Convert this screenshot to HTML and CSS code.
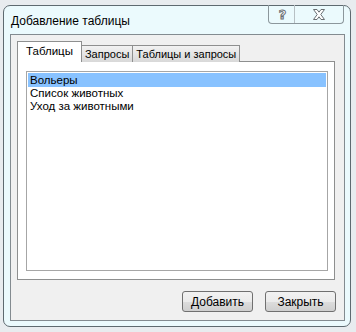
FILE: index.html
```html
<!DOCTYPE html>
<html>

<head>
    <title>Добавление таблицы</title>
    <link rel="stylesheet" href="styles.css">
</head>

<body>
    <div class="window">
        <div class="titlebar">
            <span class="title">Добавление таблицы</span>
            <div class="caption-buttons">
                <div class="cap-btn help">?</div>
                <div class="cap-btn close">
                    <svg width="14" height="11" viewBox="0 0 14 11">
                        <path d="M1.5 0.5 H5 L7 3.2 L9 0.5 H12.5 L8.8 5.5 L12.5 10.5 H9 L7 7.8 L5 10.5 H1.5 L5.2 5.5 Z"
                            fill="#fff" stroke="#6a6f73" stroke-width="1" />
                    </svg>
                </div>
            </div>
        </div>

        <div class="client">
            <div class="tabs">
                <div class="tab active">Таблицы</div>
                <div class="tab">Запросы</div>
                <div class="tab">Таблицы и запросы</div>
            </div>
            <div class="tabpanel">
                <div class="listbox">
                    <div class="item selected">Вольеры</div>
                    <div class="item">Список животных</div>
                    <div class="item">Уход за животными</div>
                </div>
            </div>
            <div class="buttons">
                <button class="btn">Добавить</button>
                <button class="btn">Закрыть</button>
            </div>
        </div>
    </div>
</body>

</html>
```

FILE: styles.css
```css
body {
    margin: 0;
    padding: 0;
    background-color: #e8ecef;
    font-family: "Liberation Sans", Arial, sans-serif;
    font-size: 11.5px;
    color: #000;
}

/* dialog frame */
.window {
    box-sizing: border-box;
    width: 348px;
    height: 322px;
    margin: 5px 0 0 3px;
    border: 1px solid #5e6a70;
    border-radius: 7px;
    background-color: #ebfafd;
    padding: 0 5px 5px 6px;
    display: flex;
    flex-direction: column;
}

.titlebar {
    height: 28px;
    flex-shrink: 0;
    display: flex;
    justify-content: space-between;
    align-items: flex-start;
}

.title {
    margin-top: 8px;
    margin-left: 1px;
    font-size: 12px;
}

.caption-buttons {
    display: flex;
    height: 18px;
    border: 1px solid #8c979c;
    border-top: none;
    border-radius: 0 0 4px 4px;
    margin-top: -1px;
    margin-right: 1px;
}

.cap-btn {
    display: flex;
    align-items: center;
    justify-content: center;
    height: 18px;
}

.help {
    width: 26px;
    padding-left: 2px;
    box-sizing: border-box;
    border-right: 1px solid #b7c0c4;
    font-family: "DejaVu Sans", sans-serif;
    font-weight: bold;
    font-size: 13px;
    color: #fff;
    -webkit-text-stroke: 1px #6a6f73;
}

.close {
    width: 48px;
}

/* inner grey area */
.client {
    flex: 1;
    background-color: #f0f0f0;
    border: 1px solid #838b90;
    padding: 7px 9px 8px 6px;
    display: flex;
    flex-direction: column;
}

.tabs {
    display: flex;
    align-items: flex-end;
    height: 20px;
    position: relative;
    z-index: 1;
}

.tab {
    height: 16px;
    line-height: 16px;
    font-size: 11px;
    padding: 0 3px;
    border: 1px solid #8e8f8f;
    border-bottom: none;
    background: linear-gradient(#f2f2f2, #d8d8d8);
    margin-left: -1px;
}

.tab.active {
    height: 20px;
    line-height: 19px;
    font-size: 11.5px;
    background: #fff;
    margin-left: 0;
    padding: 0 8px;
}

.tabpanel {
    flex: 1;
    background-color: #fff;
    border: 1px solid #8e8f8f;
    margin-top: -1px;
    padding: 9px 6px 8px 8px;
    display: flex;
}

.listbox {
    flex: 1;
    border: 1px solid #a6a6a6;
    padding: 1px;
}

.item {
    height: 13px;
    line-height: 13px;
    padding-left: 2px;
}

.item.selected {
    height: 14px;
    line-height: 14px;
    background-color: #88c2ff;
}

.buttons {
    display: flex;
    justify-content: flex-end;
    gap: 13px;
    margin-top: 11px;
}

.btn {
    box-sizing: border-box;
    width: 71px;
    height: 21px;
    border: 1px solid #707070;
    border-radius: 3px;
    background: linear-gradient(#f2f2f2 0%, #ebebeb 50%, #dddddd 51%, #cfcfcf 100%);
    font-family: "Liberation Sans", Arial, sans-serif;
    font-size: 12px;
    padding: 0;
    margin-right: -1px;
}
```
